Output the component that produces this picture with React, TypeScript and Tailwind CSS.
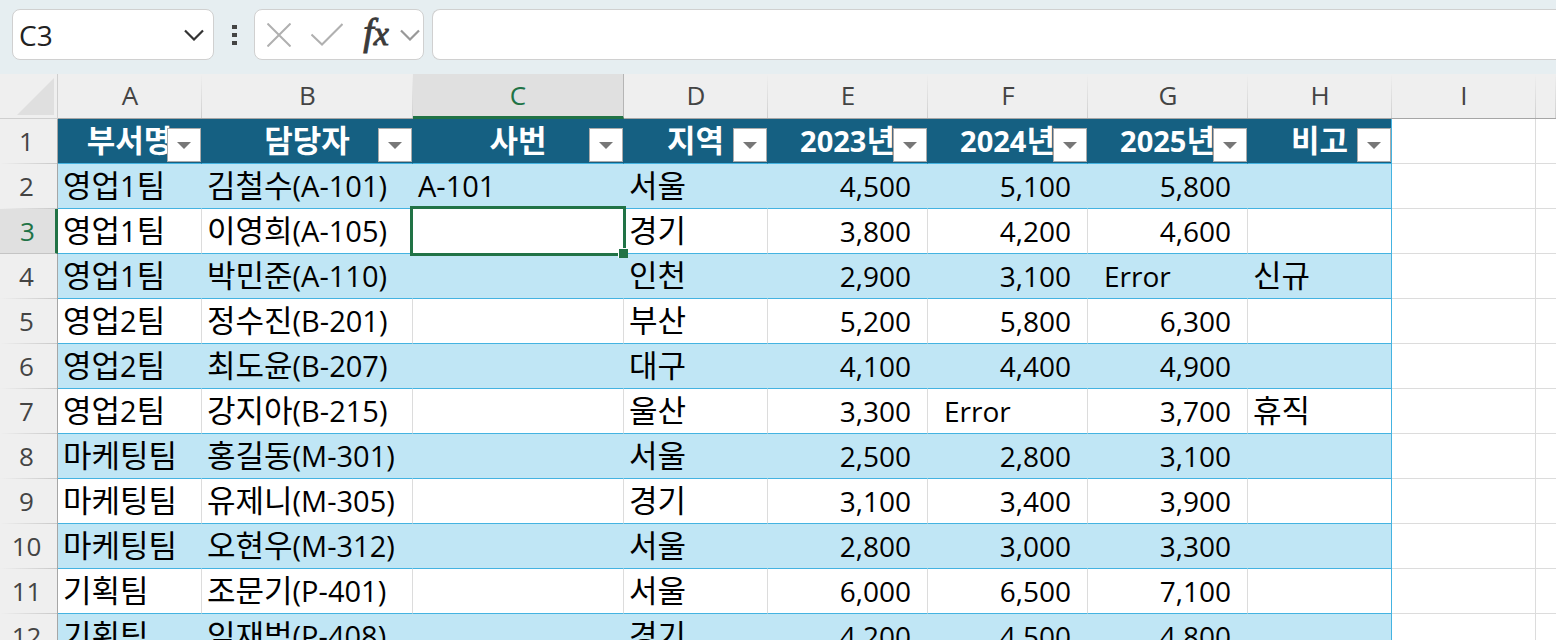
import { clsx } from "clsx";

type CellValue = string | number;

const columns = [
  { id: "A", width: "w-[144px]", title: "부서명" },
  { id: "B", width: "w-[211px]", title: "담당자" },
  { id: "C", width: "w-[211px]", title: "사번" },
  { id: "D", width: "w-[144px]", title: "지역" },
  { id: "E", width: "w-[160px]", title: "2023년" },
  { id: "F", width: "w-[160px]", title: "2024년" },
  { id: "G", width: "w-[160px]", title: "2025년" },
  { id: "H", width: "w-[144px]", title: "비고" },
];

const rows: CellValue[][] = [
  ["영업1팀", "김철수(A-101)", "A-101", "서울", 4500, 5100, 5800, ""],
  ["영업1팀", "이영희(A-105)", "", "경기", 3800, 4200, 4600, ""],
  ["영업1팀", "박민준(A-110)", "", "인천", 2900, 3100, "Error", "신규"],
  ["영업2팀", "정수진(B-201)", "", "부산", 5200, 5800, 6300, ""],
  ["영업2팀", "최도윤(B-207)", "", "대구", 4100, 4400, 4900, ""],
  ["영업2팀", "강지아(B-215)", "", "울산", 3300, "Error", 3700, "휴직"],
  ["마케팅팀", "홍길동(M-301)", "", "서울", 2500, 2800, 3100, ""],
  ["마케팅팀", "유제니(M-305)", "", "경기", 3100, 3400, 3900, ""],
  ["마케팅팀", "오현우(M-312)", "", "서울", 2800, 3000, 3300, ""],
  ["기획팀", "조문기(P-401)", "", "서울", 6000, 6500, 7100, ""],
  ["기획팀", "임재범(P-408)", "", "경기", 4200, 4500, 4800, ""],
];

const ACTIVE_COL = 2;
const ACTIVE_ROW = 3;

// Hangul runs are set a little larger than the Latin text beside them
function MixedText({ text, latin = "text-[29px]" }: { text: string; latin?: string }) {
  const parts = text.match(/[가-힣]+|[^가-힣]+/g) ?? [];
  return (
    <>
      {parts.map((part, i) => (
        <span key={i} className={/[가-힣]/.test(part) ? "text-[31px]" : latin}>
          {part}
        </span>
      ))}
    </>
  );
}

function Chevron() {
  return (
    <svg viewBox="0 0 20 12" className="h-3 w-5" fill="none" stroke="currentColor" strokeWidth="2.2">
      <path d="M1 1.5 L10 10.5 L19 1.5" />
    </svg>
  );
}

function FormulaBar() {
  return (
    <div className="flex h-[74px] shrink-0 items-start bg-[#e6eef1] pt-[9px] pl-3">
      <div className="flex h-[51px] w-[202px] items-center rounded-lg border border-[#d0d0d0] bg-white pr-[9px]">
        <input
          aria-label="이름 상자"
          defaultValue="C3"
          className="w-full min-w-0 flex-1 bg-transparent pl-1.5 text-[28px] leading-8 text-[#222] outline-none"
        />
        <button type="button" aria-label="이름 목록" className="pt-px text-[#333]">
          <Chevron />
        </button>
      </div>

      <div className="flex h-[51px] w-10 items-center justify-center">
        <svg viewBox="0 0 5 20" className="h-5 w-[5px]" fill="#444">
          <rect width="5" height="4" y="0" />
          <rect width="5" height="4" y="8" />
          <rect width="5" height="4" y="16" />
        </svg>
      </div>

      <div className="flex h-[51px] w-[170px] items-center rounded-lg border border-[#d0d0d0] bg-white pl-3">
        <button type="button" aria-label="취소">
          <svg viewBox="0 0 24 24" className="size-6" fill="none" stroke="#b0b0b0" strokeWidth="2">
            <path d="M0.5 0.5 L23.5 23.5 M23.5 0.5 L0.5 23.5" />
          </svg>
        </button>
        <button type="button" aria-label="입력" className="ml-5">
          <svg viewBox="0 0 32 24" className="h-6 w-8" fill="none" stroke="#b0b0b0" strokeWidth="2">
            <path d="M0.5 11.5 L11 21.5 L31.5 1" />
          </svg>
        </button>
        <button
          type="button"
          aria-label="함수 삽입"
          className="ml-4 flex w-[34px] items-baseline justify-center pb-1 font-['Liberation_Serif',serif] text-[#3b3b3b] italic [-webkit-text-stroke:1px_#3b3b3b]"
        >
          <span className="text-[38px] leading-10">f</span>
          <span className="text-[34px] leading-10">x</span>
        </button>
        <button type="button" aria-label="수식 목록" className="ml-[7px] text-[#999]">
          <Chevron />
        </button>
      </div>

      <input
        aria-label="수식 입력줄"
        className="ml-2 h-[51px] min-w-0 flex-1 rounded-l-lg border border-r-0 border-[#d0d0d0] bg-white px-2 text-[28px] outline-none"
      />
    </div>
  );
}

function ColumnHeader({ label, active }: { label: string; active?: boolean }) {
  return (
    <th
      scope="col"
      className={clsx(
        "h-[45px] p-0 text-[26px] leading-8 font-normal",
        active
          ? "border-r border-b-3 border-r-[#b5b5b5] border-b-[#217346] bg-[#e0e0e0] text-[#217346]"
          : "border-b border-[#a6a6a6] bg-[#efefef] bg-[linear-gradient(to_bottom,#efefef,#cfcfcf)] bg-[length:1px_100%] bg-right bg-no-repeat pb-0.5 text-[#444]",
      )}
    >
      {label}
    </th>
  );
}

function RowHeader({ row }: { row: number }) {
  const active = row === ACTIVE_ROW;
  return (
    <th
      scope="row"
      className={clsx(
        "h-[45px] p-0 text-[26px] leading-8 font-normal",
        active
          ? "border-r-3 border-b border-r-[#217346] border-b-[#c4c4c4] bg-[#e0e0e0] text-[#217346]"
          : "border-r border-[#a6a6a6] bg-[#efefef] bg-[linear-gradient(to_right,#efefef,#c8c8c8)] bg-[length:100%_1px] bg-bottom bg-no-repeat pb-px text-[#444]",
      )}
    >
      <div className={active ? "pl-0" : "pr-1"}>{row}</div>
    </th>
  );
}

function FilterCell({ title, last }: { title: string; last: boolean }) {
  return (
    <td
      className={clsx(
        "relative h-[45px] border-r border-b border-b-[#44b3e1] bg-[#156082] px-0 pt-1 pb-0 text-center leading-8 font-bold whitespace-nowrap text-white",
        last ? "border-r-[#44b3e1]" : "border-r-[#156082]",
      )}
    >
      <MixedText text={title} />
      <button
        type="button"
        aria-label={`${title} 필터`}
        className="absolute right-0 bottom-px flex size-[34px] items-center justify-center border border-[#ababab] bg-white"
      >
        <svg viewBox="0 0 14 7" className="h-[7px] w-3.5" fill="#777">
          <path d="M0 0 H14 L7 7 Z" />
        </svg>
      </button>
    </td>
  );
}

function DataCell({ value, col, row }: { value: CellValue; col: number; row: number }) {
  const banded = row % 2 === 0;
  const yearly = col >= 4 && col <= 6;
  const last = col === columns.length - 1;
  const text = typeof value === "number" ? value.toLocaleString("en-US") : value;

  return (
    <td
      className={clsx(
        "relative h-[45px] border-r border-b border-b-[#44b3e1] pt-1 pb-0 leading-8 whitespace-nowrap text-black",
        banded ? "bg-[#c0e6f5]" : "bg-white",
        last ? "border-r-[#44b3e1]" : banded ? "border-r-[#c0e6f5]" : "border-r-[#dcdcdc]",
        yearly ? "px-4" : "px-[5px]",
        typeof value === "number" ? "text-right" : "text-left",
      )}
    >
      <MixedText text={text} latin={yearly ? "text-[28px]" : "text-[29px]"} />
      {col === ACTIVE_COL && row === ACTIVE_ROW && (
        <div className="absolute -inset-[3px] z-10 border-3 border-[#217346]">
          <div className="absolute -right-[5px] -bottom-[5px] size-[10px] border-t border-l border-white bg-[#217346]" />
        </div>
      )}
    </td>
  );
}

function EmptyCells() {
  return (
    <>
      <td className="border-r border-b border-[#dcdcdc] p-0" />
      <td className="border-b border-[#dcdcdc] p-0" />
    </>
  );
}

export default function App() {
  return (
    <div className="flex h-screen flex-col overflow-hidden bg-white font-['Open_Sans','Noto_Sans_CJK_KR',sans-serif]">
      <FormulaBar />
      <div className="min-h-0 flex-1 overflow-hidden">
        <table className="w-full table-fixed border-separate border-spacing-0">
          <colgroup>
            <col className="w-[58px]" />
            {columns.map((c) => (
              <col key={c.id} className={c.width} />
            ))}
            <col className="w-[144px]" />
            <col />
          </colgroup>
          <thead>
            <tr>
              <th className="h-[45px] border-r border-b border-[#cfcfcf] bg-[#efefef] p-0">
                <button type="button" aria-label="모두 선택" className="flex w-full justify-end pr-[3px]">
                  <svg viewBox="0 0 37 37" className="size-[37px]" fill="#dfdfdf">
                    <path d="M37 0 V37 H0 Z" />
                  </svg>
                </button>
              </th>
              {columns.map((c, i) => (
                <ColumnHeader key={c.id} label={c.id} active={i === ACTIVE_COL} />
              ))}
              <ColumnHeader label="I" />
              <ColumnHeader label="" />
            </tr>
          </thead>
          <tbody>
            <tr>
              <RowHeader row={1} />
              {columns.map((c, i) => (
                <FilterCell key={c.id} title={c.title} last={i === columns.length - 1} />
              ))}
              <EmptyCells />
            </tr>
            {rows.map((cells, r) => (
              <tr key={r}>
                <RowHeader row={r + 2} />
                {cells.map((value, c) => (
                  <DataCell key={c} value={value} col={c} row={r + 2} />
                ))}
                <EmptyCells />
              </tr>
            ))}
          </tbody>
        </table>
      </div>
    </div>
  );
}
